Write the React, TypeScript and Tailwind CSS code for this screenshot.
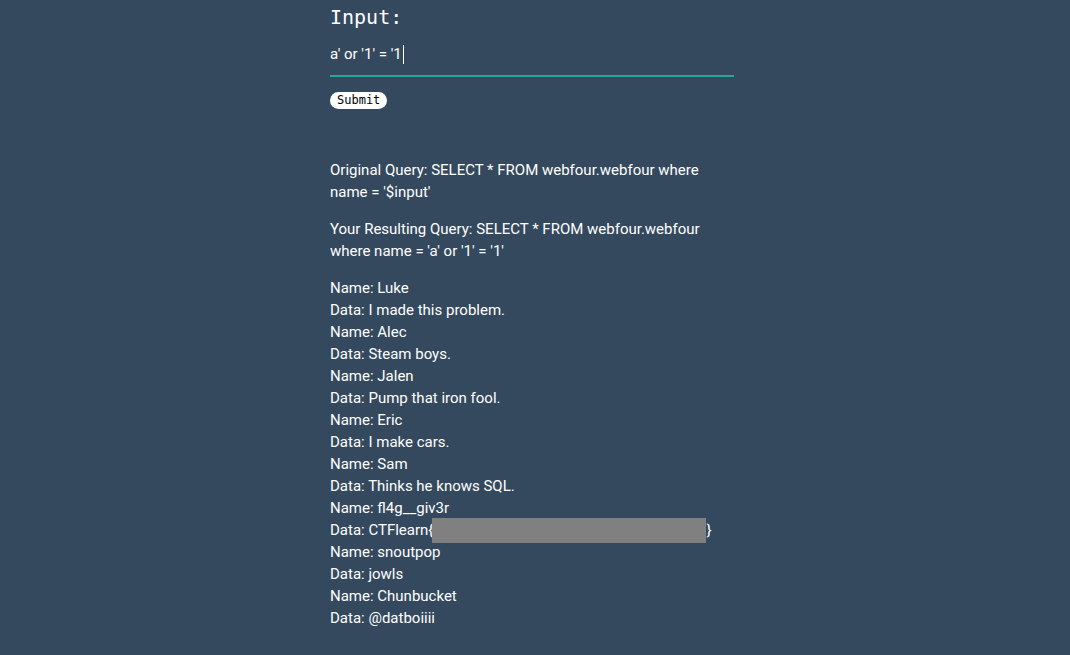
import React from "react";

const rows: [string, string][] = [
  ["Luke", "I made this problem."],
  ["Alec", "Steam boys."],
  ["Jalen", "Pump that iron fool."],
  ["Eric", "I make cars."],
  ["Sam", "Thinks he knows SQL."],
  ["fl4g__giv3r", "FLAG"],
  ["snoutpop", "jowls"],
  ["Chunbucket", "@datboiiii"],
];

export default function App() {
  return (
    <div className="min-h-[655px] bg-[#34495e] text-white font-['Roboto',sans-serif] text-[15px] leading-[22px]">
      <div className="ml-[330px] w-[404px]">
        <h1 className="font-['DejaVu_Sans_Mono',monospace] text-[20px] leading-[24px] pt-[5px]">Input:</h1>
        <div className="mt-[14px] border-b-2 border-[#26a69a] h-[34px]">
          <div className="flex items-center text-[15px] leading-[22px]">
            <span>a' or '1' = '1</span>
            <span className="ml-[1px] w-px h-[19px] bg-white" />
          </div>
        </div>
        <button className="mt-[15px] bg-white text-black rounded-full px-[7px] h-[17px] font-['DejaVu_Sans_Mono',monospace] text-[12px] leading-[17px]">
          Submit
        </button>
        <p className="mt-[49px]">Original Query: SELECT * FROM webfour.webfour where name = '$input'</p>
        <p className="mt-[15px]">Your Resulting Query: SELECT * FROM webfour.webfour where name = 'a' or '1' = '1'</p>
        <div className="mt-[15px]">
          {rows.map(([n, d]) => (
            <React.Fragment key={n}>
              <div>Name: {n}</div>
              {d === "FLAG" ? (
                <div className="flex items-center">
                  <span>Data: CTFlearn{"{"}</span>
                  <span className="w-[274px] h-[25px] -my-[2px] bg-[#808080] -ml-[1px]" />
                  <span>{"}"}</span>
                </div>
              ) : (
                <div>Data: {d}</div>
              )}
            </React.Fragment>
          ))}
        </div>
      </div>
    </div>
  );
}
